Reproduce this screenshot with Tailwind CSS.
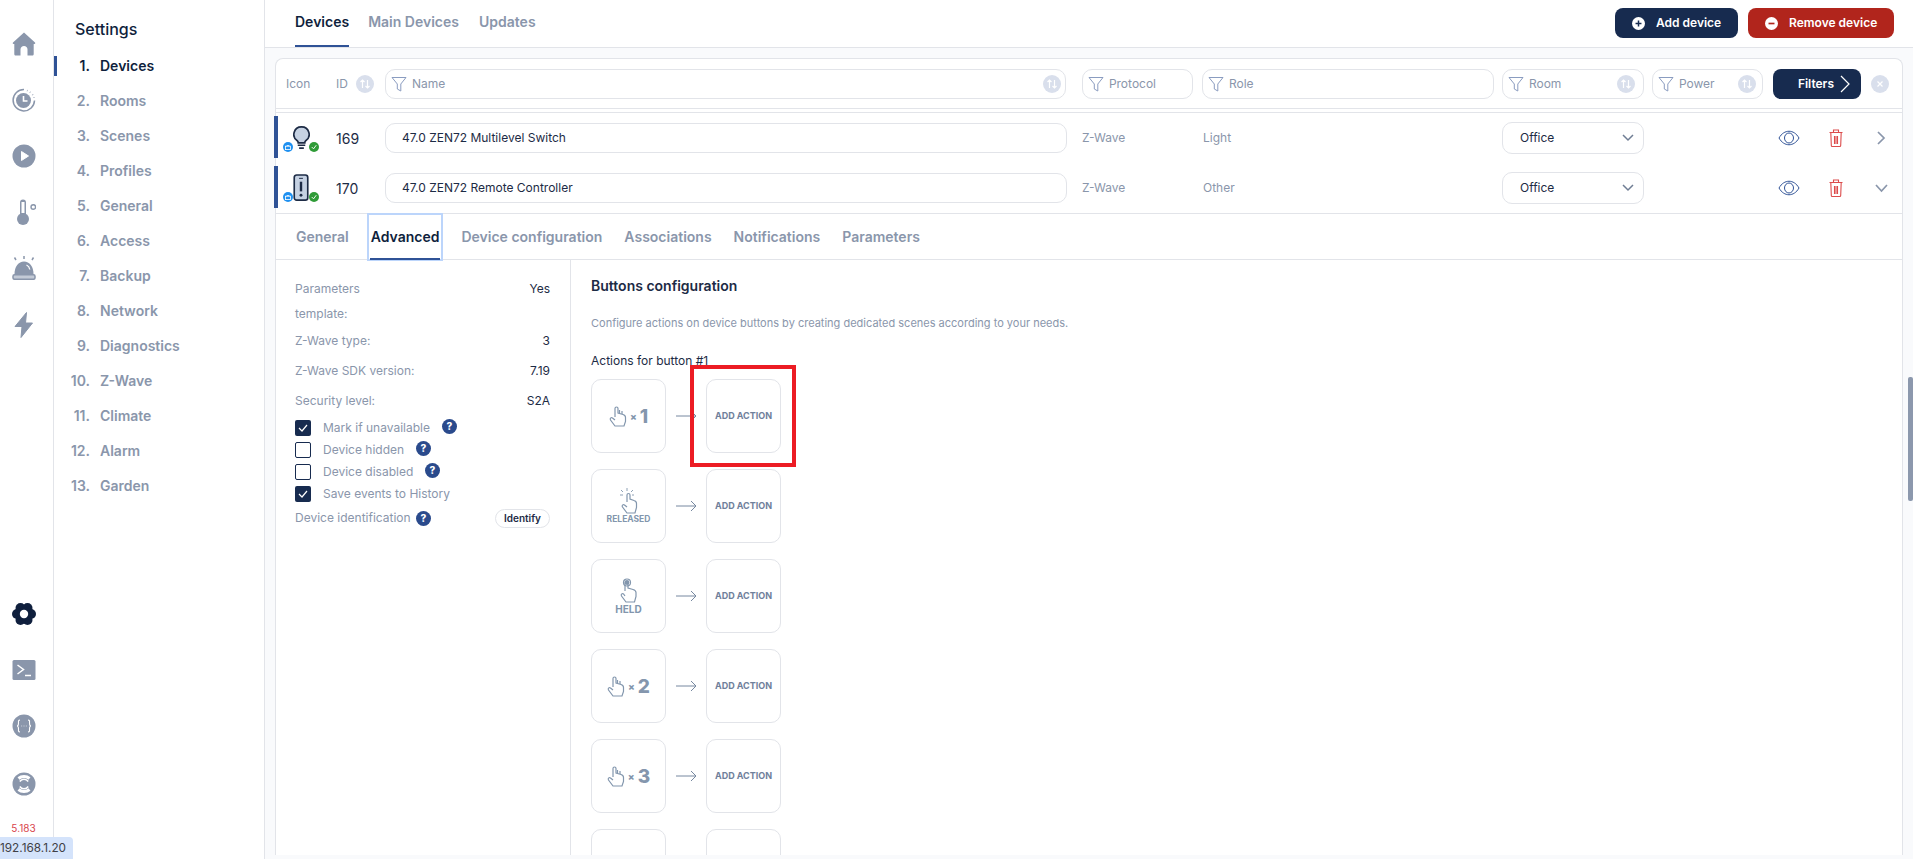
<!doctype html>
<html>
<head>
<meta charset="utf-8">
<script src="https://cdn.jsdelivr.net/npm/@tailwindcss/browser@4"></script>
</head>
<body class="h-[859px] w-[1913px] overflow-hidden bg-white font-['Inter',sans-serif] text-[#0f1f3d]">
<div class="flex h-[859px] relative">
  <!-- Rail -->
  <aside class="w-[54px] shrink-0 border-r border-[#e2e4e9] flex flex-col items-center text-[#8a96ab] relative">
    <div class="flex flex-col items-center gap-[32px] pt-[32px] w-[48px] self-start">
      <svg class="w-6 h-6" viewBox="0 0 24 24" fill="currentColor"><path d="M12 .5 1 10.500c-.5.6-.3 1.500.5 1.500h.8v10c0 1 .7 1.500 1.500 1.500h4.700v-6c0-2 1.500-3.500 3.500-3.500s3.500 1.500 3.500 3.500v6h4.700c.8 0 1.500-.5 1.500-1.500V12h.8c.8 0 1-.9.5-1.500z"/></svg>
      <svg class="w-6 h-6" viewBox="0 0 24 24" fill="none" stroke="currentColor"><circle cx="11.500" cy="12.500" r="7.500" fill="currentColor" stroke="none"/><path d="M11.500 8v5h4" stroke="#fff" stroke-width="1.600"/><path d="M12 1.500a10.700 10.700 0 1 0 10.500 11" stroke-width="1.500"/><path d="M15 2.500l.5.2M18 4l.4.4M20.500 6.500l.3.4M22 9.500v.4" stroke-width="1.700"/></svg>
      <svg class="w-6 h-6" viewBox="0 0 24 24"><circle cx="12" cy="12" r="11.500" fill="currentColor"/><path d="M9.500 7.500v9l7-4.500z" fill="#fff" stroke="#fff" stroke-linejoin="round"/></svg>
      <svg class="w-6 h-[26px] -my-[1px]" viewBox="0 0 24 26" fill="none"><circle cx="11" cy="20" r="6" fill="currentColor"/><path d="M8 16V3.500a3 3 0 0 1 6 0V16z" fill="currentColor"/><path d="M11 3v11" stroke="#fff" stroke-width="3"/><circle cx="21.300" cy="8" r="2.300" stroke="currentColor" stroke-width="1.400"/></svg>
      <svg class="w-6 h-6" viewBox="0 0 24 24" fill="currentColor"><path d="M2.500 18c0-7.500 4-12.500 9.500-12.500S21.500 10.500 21.500 18z"/><path d="M14.500 9c2 .9 3 2.500 3.300 4.500" stroke="#fff" stroke-width="1.300" fill="none"/><rect x="1" y="18.800" width="22" height="4.500" rx="1.500" fill="#c3cad6" stroke="currentColor" stroke-width="1.500"/><path d="M12 0v3M2.500 1.500l1.500 2.500M21.500 1.500L20 4" stroke="currentColor" stroke-width="1.500"/></svg>
      <svg class="w-6 h-[26px]" viewBox="0 0 24 26" fill="currentColor"><path d="M14.500 0.500 3 14.500h7l-1 11 11.500-14.500h-7z" stroke="currentColor" stroke-linejoin="round"/></svg>
    </div>
    <div class="absolute top-[602px] left-[11px] flex flex-col gap-[34px] items-center w-[26px]">
      <svg class="w-6 h-6 text-[#0f1f3d]" viewBox="0 0 24 24" fill="currentColor"><circle cx="19" cy="12" r="5"/><circle cx="15.500" cy="18.060" r="5"/><circle cx="8.500" cy="18.060" r="5"/><circle cx="5" cy="12" r="5"/><circle cx="8.500" cy="5.940" r="5"/><circle cx="15.500" cy="5.940" r="5"/><circle cx="12" cy="12" r="7"/><circle cx="12" cy="12" r="4.200" fill="#fff"/></svg>
      <svg class="w-6 h-5" viewBox="0 0 24 20"><rect x=".5" width="23" height="20" rx="1.500" fill="currentColor"/><path d="M5.500 5l6 4.500-6 4.500" stroke="#fff" stroke-width="1.500" fill="none"/><path d="M13 15.500h6" stroke="#fff" stroke-width="1.500"/></svg>
      <svg class="w-6 h-6" viewBox="0 0 24 24"><circle cx="12" cy="12" r="11.500" fill="currentColor"/><path d="M8 6c-2 0-1.500 1.500-1.500 3S6.500 12 5 12c1.500 0 1.500 1.500 1.500 3S6 18 8 18M16 6c2 0 1.500 1.500 1.500 3s0 3 1.500 3c-1.500 0-1.500 1.500-1.500 3s.5 3-1.500 3" stroke="#fff" stroke-width="1.100" fill="none"/><path d="M9.500 12h.6M11.700 12h.6M13.900 12h.6" stroke="#fff" stroke-width="1.200"/></svg>
      <svg class="w-6 h-6" viewBox="0 0 24 24"><circle cx="12" cy="12" r="11.500" fill="currentColor"/><path d="M6.500 6.500c3-2.600 8-2.600 11 0M6.500 17.500c3 2.600 8 2.600 11 0" stroke="#fff" stroke-width="3" fill="none"/><path d="M7.800 9.500a5 5 0 0 1 8.400 0M7.800 14.500a5 5 0 0 0 8.400 0" stroke="#fff" stroke-width="1.500" fill="none"/></svg>
    </div>
    <div class="absolute top-[821px] left-0 w-[47px] text-center text-[10px] leading-[14px] text-[#d8434b]">5.183</div>
  </aside>
  <div class="absolute left-0 top-[837px] w-[73px] h-[22px] bg-[#d4e3fb] rounded-tr-[4px] text-[11.800px] leading-[22px] text-[#3f3f46] whitespace-nowrap">192.168.1.20</div>

  <!-- Settings nav -->
  <nav class="w-[211px] shrink-0 border-r border-[#e2e4e9] relative">
    <h1 class="pl-[21px] pt-[19px] text-[16px] leading-[20px] font-medium text-[#0f1f3d]">Settings</h1>
    <ul class="mt-[9px] text-[14px] font-semibold text-[#8a96ab]">
      <li class="h-[35px] flex items-center relative text-[#0f1f3d]"><span class="absolute left-0 top-[8px] w-[3px] h-[20px] bg-[#2f5296]"></span><span class="w-[36px] text-right">1.</span><span class="ml-[10px]">Devices</span></li>
      <li class="h-[35px] flex items-center"><span class="w-[36px] text-right">2.</span><span class="ml-[10px]">Rooms</span></li>
      <li class="h-[35px] flex items-center"><span class="w-[36px] text-right">3.</span><span class="ml-[10px]">Scenes</span></li>
      <li class="h-[35px] flex items-center"><span class="w-[36px] text-right">4.</span><span class="ml-[10px]">Profiles</span></li>
      <li class="h-[35px] flex items-center"><span class="w-[36px] text-right">5.</span><span class="ml-[10px]">General</span></li>
      <li class="h-[35px] flex items-center"><span class="w-[36px] text-right">6.</span><span class="ml-[10px]">Access</span></li>
      <li class="h-[35px] flex items-center"><span class="w-[36px] text-right">7.</span><span class="ml-[10px]">Backup</span></li>
      <li class="h-[35px] flex items-center"><span class="w-[36px] text-right">8.</span><span class="ml-[10px]">Network</span></li>
      <li class="h-[35px] flex items-center"><span class="w-[36px] text-right">9.</span><span class="ml-[10px]">Diagnostics</span></li>
      <li class="h-[35px] flex items-center"><span class="w-[36px] text-right">10.</span><span class="ml-[10px]">Z-Wave</span></li>
      <li class="h-[35px] flex items-center"><span class="w-[36px] text-right">11.</span><span class="ml-[10px]">Climate</span></li>
      <li class="h-[35px] flex items-center"><span class="w-[36px] text-right">12.</span><span class="ml-[10px]">Alarm</span></li>
      <li class="h-[35px] flex items-center"><span class="w-[36px] text-right">13.</span><span class="ml-[10px]">Garden</span></li>
    </ul>
  </nav>

  <!-- Main -->
  <main class="flex-1 min-w-0 flex flex-col relative">
    <header class="h-[48px] shrink-0 border-b border-[#e2e4e9] flex items-start relative">
      <div class="flex pl-[30px] gap-[20px] text-[14px] font-semibold text-[#8a96ab]">
        <span class="h-[47px] pt-[12px] leading-[20px] border-b-2 border-[#2f5296] text-[#0f1f3d]">Devices</span>
        <span class="pt-[12px] leading-[20px] -ml-[1px]">Main Devices</span>
        <span class="pt-[12px] leading-[20px]">Updates</span>
      </div>
      <div class="ml-auto mr-[19px] mt-[8px] flex gap-[10px] text-[12px] font-semibold text-white">
        <button class="h-[30px] w-[123px] rounded-[8px] bg-[#172b4f] flex items-center pl-[17px] gap-[11px]"><svg class="w-[13px] h-[13px]" viewBox="0 0 14 14"><circle cx="7" cy="7" r="7" fill="#fff"/><path d="M7 3.800v6.400M3.800 7h6.400" stroke="#172b4f" stroke-width="1.600"/></svg>Add device</button>
        <button class="h-[30px] w-[146px] rounded-[8px] bg-[#b1251c] flex items-center pl-[17px] gap-[11px]"><svg class="w-[13px] h-[13px]" viewBox="0 0 14 14"><circle cx="7" cy="7" r="7" fill="#fff"/><path d="M3.800 7h6.400" stroke="#b1251c" stroke-width="1.800"/></svg>Remove device</button>
      </div>
    </header>

    <div class="flex-1 min-h-0 bg-[#f9fafc] pl-[10px] pr-[10px] pt-[10px] pb-[4px] flex flex-col">
      <div class="flex-1 min-h-0 overflow-x-visible overflow-y-clip bg-white border border-[#e2e4e9] rounded-t-[8px] border-b-0">
        <!-- Filter row -->
        <div class="h-[50px] border-b border-[#e2e4e9] flex items-center text-[12px] text-[#8a96ab] pl-[10px] relative">
          <span class="w-[50px]">Icon</span>
          <span>ID</span>
          <svg class="w-[18px] h-[18px] ml-[8px]" viewBox="0 0 18 18"><circle cx="9" cy="9" r="9" fill="#d9dfec"/><path d="M6.500 13V5M4.500 7l2-2 2 2M11.500 5v8M9.500 11l2 2 2-2" stroke="#fff" stroke-width="1.200" fill="none"/></svg>
          <div class="ml-[11px] w-[681px] h-[30px] border border-[#e2e4e9] rounded-[10px] flex items-center pl-[5px] gap-[5px]">
            <svg class="w-[16px] h-[16px]" viewBox="0 0 16 16" fill="none" stroke="#8a9cc0"><path d="M1 1.500h14L9.800 8v7l-3.500-2V8z" stroke-linejoin="round"/></svg>Name
            <svg class="w-[18px] h-[18px] ml-auto mr-[4px]" viewBox="0 0 18 18"><circle cx="9" cy="9" r="9" fill="#d9dfec"/><path d="M6.500 13V5M4.500 7l2-2 2 2M11.500 5v8M9.500 11l2 2 2-2" stroke="#fff" stroke-width="1.200" fill="none"/></svg>
          </div>
          <div class="ml-[16px] w-[111px] h-[30px] border border-[#e2e4e9] rounded-[10px] flex items-center pl-[5px] gap-[5px]">
            <svg class="w-[16px] h-[16px]" viewBox="0 0 16 16" fill="none" stroke="#8a9cc0"><path d="M1 1.500h14L9.800 8v7l-3.500-2V8z" stroke-linejoin="round"/></svg>Protocol
          </div>
          <div class="ml-[9px] w-[292px] h-[30px] border border-[#e2e4e9] rounded-[10px] flex items-center pl-[5px] gap-[5px]">
            <svg class="w-[16px] h-[16px]" viewBox="0 0 16 16" fill="none" stroke="#8a9cc0"><path d="M1 1.500h14L9.800 8v7l-3.500-2V8z" stroke-linejoin="round"/></svg>Role
          </div>
          <div class="ml-[8px] w-[142px] h-[30px] border border-[#e2e4e9] rounded-[10px] flex items-center pl-[5px] gap-[5px]">
            <svg class="w-[16px] h-[16px]" viewBox="0 0 16 16" fill="none" stroke="#8a9cc0"><path d="M1 1.500h14L9.800 8v7l-3.500-2V8z" stroke-linejoin="round"/></svg>Room
            <svg class="w-[18px] h-[18px] ml-auto mr-[8px]" viewBox="0 0 18 18"><circle cx="9" cy="9" r="9" fill="#d9dfec"/><path d="M6.500 13V5M4.500 7l2-2 2 2M11.500 5v8M9.500 11l2 2 2-2" stroke="#fff" stroke-width="1.200" fill="none"/></svg>
          </div>
          <div class="ml-[8px] w-[111px] h-[30px] border border-[#e2e4e9] rounded-[10px] flex items-center pl-[5px] gap-[5px]">
            <svg class="w-[16px] h-[16px]" viewBox="0 0 16 16" fill="none" stroke="#8a9cc0"><path d="M1 1.500h14L9.800 8v7l-3.500-2V8z" stroke-linejoin="round"/></svg>Power
            <svg class="w-[18px] h-[18px] ml-auto mr-[6px]" viewBox="0 0 18 18"><circle cx="9" cy="9" r="9" fill="#d9dfec"/><path d="M6.500 13V5M4.500 7l2-2 2 2M11.500 5v8M9.500 11l2 2 2-2" stroke="#fff" stroke-width="1.200" fill="none"/></svg>
          </div>
          <button class="ml-[10px] w-[88px] h-[30px] rounded-[8px] bg-[#172b4f] text-white font-semibold flex items-center pl-[25px] gap-[6px]">Filters<svg class="w-[10px] h-[18px]" viewBox="0 0 10 18" fill="none" stroke="#fff" stroke-width="1.200"><path d="M1 1l8 8-8 8"/></svg></button>
          <svg class="ml-[10px] w-[18px] h-[18px]" viewBox="0 0 18 18"><circle cx="9" cy="9" r="9" fill="#d9dfec"/><path d="M6.500 6.500l5 5M11.500 6.500l-5 5" stroke="#fff" stroke-width="1.200"/></svg>
        </div>
        <div class="h-[3px]"></div>
        <!-- Rows -->
        <div class="border-t border-b border-[#e2e4e9]">
          <div class="h-[50px] flex items-center relative text-[12px]">
            <span class="absolute left-[-2px] top-[3px] w-[4px] h-[42px] bg-[#2f5296]"></span>
            <div class="w-[52px] ml-[8px] shrink-0 relative h-[30px]">
              <svg class="absolute left-[9px] top-[3px] w-[17px] h-[23px]" viewBox="1.200 .5 17.600 24.500" fill="none" stroke="#1d2b45" stroke-width="1.800"><path d="M10 1.500a8 8 0 0 0-4.500 14.700c.7.500 1 1.300 1 2.300h7c0-1 .3-1.800 1-2.300A8 8 0 0 0 10 1.500z" fill="#c5d1e2"/><path d="M6 21h8M7.500 24h5"/></svg>
              <span class="absolute left-[-1px] top-[19px] w-[10px] h-[10px] rounded-full bg-[#1e90f0] flex items-center justify-center"><svg class="w-[6px] h-[5px]" viewBox="0 0 6 5" fill="none" stroke="#fff" stroke-width=".8"><rect x=".5" y="1.200" width="5" height="3.400"/><path d="M2 1.200V.4h2v.8"/></svg></span>
              <span class="absolute left-[25px] top-[19px] w-[10px] h-[10px] rounded-full bg-[#2f9b37]"><svg viewBox="0 0 11 11" fill="none" stroke="#fff"><path d="M3 5.500l2 2 3-4"/></svg></span>
            </div>
            <span class="w-[49px] text-[14px] text-[#1d2b45]">169</span>
            <div class="w-[682px] h-[30px] border border-[#e2e4e9] rounded-[10px] flex items-center pl-[16px] text-[#1d2b45]">47.0 ZEN72 Multilevel Switch</div>
            <span class="ml-[15px] w-[121px] text-[#8a96ab]">Z-Wave</span>
            <span class="w-[299px] text-[#8a96ab]">Light</span>
            <div class="w-[142px] h-[32px] border border-[#e2e4e9] rounded-[10px] flex items-center px-[17px] text-[#1d2b45]">Office<svg class="ml-auto w-[12px] h-[8px] mr-[-8px]" viewBox="0 0 12 8" fill="none" stroke="#6f7d94" stroke-width="1.500"><path d="M1 1l5 5 5-5"/></svg></div>
            <svg class="ml-[134px] w-[22px] h-[16px]" viewBox="0 0 22 16" fill="none" stroke="#2f5296"><path d="M1 8c5-9 15-9 20 0-5 9-15 9-20 0z"/><ellipse cx="11" cy="8" rx="4.500" ry="5"/></svg>
            <svg class="ml-[29px] w-[14px] h-[18px]" viewBox="0 0 14 18" fill="none" stroke="#dc4c4c" stroke-width="1.100"><path d="M.5 3.500h13M4.500 3.500V1h5v2.500M1.800 3.500l.5 13c0 .5.300 1 1 1h7.400c.7 0 1-.5 1-1l.5-13M5.500 7v8M7 7v8M8.500 7v8"/></svg>
            <svg class="ml-[34px] w-[9px] h-[14px]" viewBox="0 0 9 14" fill="none" stroke="#8a96ab" stroke-width="1.700"><path d="M1 1l6 6-6 6"/></svg>
          </div>
          <div class="h-[50px] flex items-center relative text-[12px]">
            <span class="absolute left-[-2px] top-[3px] w-[4px] h-[42px] bg-[#2f5296]"></span>
            <div class="w-[52px] ml-[8px] shrink-0 relative h-[30px]">
              <svg class="absolute left-[8px] top-[1px] w-[18px] h-[28px]" viewBox="0 0 18 29" fill="none"><rect x="2" y="1" width="14" height="26" rx="2.500" fill="#c5d1e2" stroke="#1d2b45" stroke-width="1.700"/><path d="M9 8v10" stroke="#1d2b45" stroke-width="2.500"/><circle cx="9" cy="22" r="1.500" fill="#1d2b45"/><path d="M7 4.500h4" stroke="#1d2b45"/></svg>
              <span class="absolute left-[-1px] top-[19px] w-[10px] h-[10px] rounded-full bg-[#1e90f0] flex items-center justify-center"><svg class="w-[6px] h-[5px]" viewBox="0 0 6 5" fill="none" stroke="#fff" stroke-width=".8"><rect x=".5" y="1.200" width="5" height="3.400"/><path d="M2 1.200V.4h2v.8"/></svg></span>
              <span class="absolute left-[25px] top-[19px] w-[10px] h-[10px] rounded-full bg-[#2f9b37]"><svg viewBox="0 0 11 11" fill="none" stroke="#fff"><path d="M3 5.500l2 2 3-4"/></svg></span>
            </div>
            <span class="w-[49px] text-[14px] text-[#1d2b45]">170</span>
            <div class="w-[682px] h-[30px] border border-[#e2e4e9] rounded-[10px] flex items-center pl-[16px] text-[#1d2b45]">47.0 ZEN72 Remote Controller</div>
            <span class="ml-[15px] w-[121px] text-[#8a96ab]">Z-Wave</span>
            <span class="w-[299px] text-[#8a96ab]">Other</span>
            <div class="w-[142px] h-[32px] border border-[#e2e4e9] rounded-[10px] flex items-center px-[17px] text-[#1d2b45]">Office<svg class="ml-auto w-[12px] h-[8px] mr-[-8px]" viewBox="0 0 12 8" fill="none" stroke="#6f7d94" stroke-width="1.500"><path d="M1 1l5 5 5-5"/></svg></div>
            <svg class="ml-[134px] w-[22px] h-[16px]" viewBox="0 0 22 16" fill="none" stroke="#2f5296"><path d="M1 8c5-9 15-9 20 0-5 9-15 9-20 0z"/><ellipse cx="11" cy="8" rx="4.500" ry="5"/></svg>
            <svg class="ml-[29px] w-[14px] h-[18px]" viewBox="0 0 14 18" fill="none" stroke="#dc4c4c" stroke-width="1.100"><path d="M.5 3.500h13M4.500 3.500V1h5v2.500M1.800 3.500l.5 13c0 .5.300 1 1 1h7.400c.7 0 1-.5 1-1l.5-13M5.500 7v8M7 7v8M8.500 7v8"/></svg>
            <svg class="ml-[32px] w-[13px] h-[9px]" viewBox="0 0 13 9" fill="none" stroke="#8a96ab" stroke-width="1.700"><path d="M1 1l5.500 6L12 1"/></svg>
          </div>
        </div>
        <!-- Detail tabs -->
        <div class="h-[46px] border-b border-[#e2e4e9] flex text-[14px] font-semibold text-[#8a96ab] pl-[20px] gap-[22px]">
          <span class="leading-[46px]">General</span>
          <span class="leading-[46px] h-[46px] text-[#0f1f3d] relative">Advanced<span class="absolute -inset-x-[4px] inset-y-[-1px] border-2 border-[#bcd5fb]"></span><span class="absolute -inset-x-[1px] bottom-[0px] h-[2px] bg-[#2f5296]"></span></span>
          <span class="leading-[46px]">Device configuration</span>
          <span class="leading-[46px]">Associations</span>
          <span class="leading-[46px]">Notifications</span>
          <span class="leading-[46px]">Parameters</span>
        </div>
        <!-- Detail body -->
        <div class="flex relative">
          <div class="w-[295px] shrink-0 pt-[16px] pl-[19px] pr-[20px] mb-[-200px] h-[600px] border-r border-[#e2e4e9] text-[12px] text-[#8a96ab]">
            <div class="flex justify-between leading-[25px] h-[52px]"><span class="w-[90px]">Parameters template:</span><span class="text-[#1d2b45]">Yes</span></div>
            <div class="flex justify-between h-[30px] leading-[30px] -mt-[2px]"><span>Z-Wave type:</span><span class="text-[#1d2b45]">3</span></div>
            <div class="flex justify-between h-[30px] leading-[30px]"><span>Z-Wave SDK version:</span><span class="text-[#1d2b45]">7.19</span></div>
            <div class="flex justify-between h-[31px] leading-[30px]"><span>Security level:</span><span class="text-[#1d2b45]">S2A</span></div>
            <div class="h-[22px] flex items-center gap-[12px]"><span class="w-[16px] h-[16px] rounded-[2px] bg-[#172b4f] flex items-center justify-center"><svg class="w-[10px] h-[8px]" viewBox="0 0 10 8" fill="none" stroke="#fff" stroke-width="1.200"><path d="M1 4l3 3 5-6"/></svg></span>Mark if unavailable<svg class="w-[15px] h-[15px] -mt-[4px]" viewBox="0 0 15 15"><circle cx="7.500" cy="7.500" r="7.500" fill="#2a4a8c"/><text x="7.500" y="11" text-anchor="middle" font-size="10" font-weight="800" fill="#fff" font-family="Inter">?</text></svg></div>
            <div class="h-[22px] flex items-center gap-[12px]"><span class="w-[16px] h-[16px] rounded-[2px] border border-[#172b4f]"></span>Device hidden<svg class="w-[15px] h-[15px] -mt-[3px]" viewBox="0 0 15 15"><circle cx="7.500" cy="7.500" r="7.500" fill="#2a4a8c"/><text x="7.500" y="11" text-anchor="middle" font-size="10" font-weight="800" fill="#fff" font-family="Inter">?</text></svg></div>
            <div class="h-[22px] flex items-center gap-[12px]"><span class="w-[16px] h-[16px] rounded-[2px] border border-[#172b4f]"></span>Device disabled<svg class="w-[15px] h-[15px] -mt-[3px]" viewBox="0 0 15 15"><circle cx="7.500" cy="7.500" r="7.500" fill="#2a4a8c"/><text x="7.500" y="11" text-anchor="middle" font-size="10" font-weight="800" fill="#fff" font-family="Inter">?</text></svg></div>
            <div class="h-[22px] flex items-center gap-[12px]"><span class="w-[16px] h-[16px] rounded-[2px] bg-[#172b4f] flex items-center justify-center"><svg class="w-[10px] h-[8px]" viewBox="0 0 10 8" fill="none" stroke="#fff" stroke-width="1.200"><path d="M1 4l3 3 5-6"/></svg></span>Save events to History</div>
            <div class="h-[26px] flex items-center gap-[5px]">Device identification<svg class="w-[15px] h-[15px]" viewBox="0 0 15 15"><circle cx="7.500" cy="7.500" r="7.500" fill="#2a4a8c"/><text x="7.500" y="11" text-anchor="middle" font-size="10" font-weight="800" fill="#fff" font-family="Inter">?</text></svg><button class="ml-auto w-[55px] h-[19px] rounded-full border border-[#e2e4e9] text-[10px] font-semibold text-[#1d2b45]">Identify</button></div>
          </div>
          <div class="pl-[20px] pt-[16px] relative">
            <h2 class="text-[14px] leading-[20px] font-semibold text-[#1d2b45]">Buttons configuration</h2>
            <p class="mt-[19px] text-[11px] leading-[16px] text-[#8a96ab]">Configure actions on device buttons by creating dedicated scenes according to your needs.</p>
            <p class="mt-[22px] text-[12px] leading-[16px] text-[#1d2b45]">Actions for button #1</p>
            <div class="mt-[10px] flex flex-col gap-[16px]">
              <div class="flex items-center">
                <div class="w-[75px] h-[74px] border border-[#e2e4e9] rounded-[10px] flex items-center justify-center gap-[3px] text-[#8296ad]">
                  <svg class="w-[18px] h-[21px]" viewBox="0 0 18 21" fill="none" stroke="currentColor" stroke-width="1.200"><path d="M6 11V2.500c0-2 3-2 3 0V7l5 1.500c2 .6 2.500 1.500 2.500 3v4L15 20H6l-4.500-6c-1-2 1-3 2-2L6 14"/><path d="M10.500 7V4M13 8V5"/></svg>
                  <span class="text-[10px] font-extrabold">×</span><span class="text-[19px] font-extrabold leading-none text-[#8496ad]">1</span>
                </div>
                <svg class="ml-[10px] mr-[9px] w-[21px] h-[12px]" viewBox="0 0 21 12" fill="none" stroke="#7688a0"><path d="M0 6h20M15 1l5 5-5 5"/></svg>
                <div class="w-[75px] h-[74px] border border-[#e2e4e9] rounded-[10px] flex items-center justify-center text-[9px] font-bold text-[#6f809b] whitespace-nowrap">ADD ACTION</div>
              </div>
              <div class="flex items-center">
                <div class="w-[75px] h-[74px] border border-[#e2e4e9] rounded-[10px] flex flex-col items-center justify-center text-[#8296ad]">
                  <svg class="w-[20px] h-[27px]" viewBox="0 0 20 27" fill="none" stroke="currentColor" stroke-width="1.200"><path d="M8 15V8c0-2 3-2 3 0v4l4 1.500c2 .6 2.500 1.500 2.500 3v4L16 26H8l-4.500-6c-1-2 1-3 2-2L8 20"/><path d="M8 1v3M2 3l2 2M1 8h3M14 3l-2 2M15 8h-2" stroke-width=".9"/></svg>
                  <span class="text-[8.500px] leading-[11px] font-bold">RELEASED</span>
                </div>
                <svg class="ml-[10px] mr-[9px] w-[21px] h-[12px]" viewBox="0 0 21 12" fill="none" stroke="#7688a0"><path d="M0 6h20M15 1l5 5-5 5"/></svg>
                <div class="w-[75px] h-[74px] border border-[#e2e4e9] rounded-[10px] flex items-center justify-center text-[9px] font-bold text-[#6f809b] whitespace-nowrap">ADD ACTION</div>
              </div>
              <div class="flex items-center">
                <div class="w-[75px] h-[74px] border border-[#e2e4e9] rounded-[10px] flex flex-col items-center justify-center text-[#8296ad]">
                  <svg class="w-[20px] h-[25px]" viewBox="0 0 20 25" fill="none" stroke="currentColor" stroke-width="1.200"><circle cx="8" cy="4.500" r="3.500"/><circle cx="8" cy="4.500" r="1.800" fill="currentColor"/><path d="M6 13V5c0-2 3-2 3 0v5l5 1.500c2 .6 3 1.500 3 3v4L15.500 24H7l-4.500-6c-1-2 1-3 2-2L6 18"/></svg>
                  <span class="text-[10px] leading-[12px] font-bold">HELD</span>
                </div>
                <svg class="ml-[10px] mr-[9px] w-[21px] h-[12px]" viewBox="0 0 21 12" fill="none" stroke="#7688a0"><path d="M0 6h20M15 1l5 5-5 5"/></svg>
                <div class="w-[75px] h-[74px] border border-[#e2e4e9] rounded-[10px] flex items-center justify-center text-[9px] font-bold text-[#6f809b] whitespace-nowrap">ADD ACTION</div>
              </div>
              <div class="flex items-center">
                <div class="w-[75px] h-[74px] border border-[#e2e4e9] rounded-[10px] flex items-center justify-center gap-[3px] text-[#8296ad]">
                  <svg class="w-[18px] h-[21px]" viewBox="0 0 18 21" fill="none" stroke="currentColor" stroke-width="1.200"><path d="M6 11V2.500c0-2 3-2 3 0V7l5 1.500c2 .6 2.500 1.500 2.500 3v4L15 20H6l-4.500-6c-1-2 1-3 2-2L6 14"/><path d="M10.500 7V4M13 8V5"/></svg>
                  <span class="text-[10px] font-extrabold">×</span><span class="text-[19px] font-extrabold leading-none text-[#8496ad]">2</span>
                </div>
                <svg class="ml-[10px] mr-[9px] w-[21px] h-[12px]" viewBox="0 0 21 12" fill="none" stroke="#7688a0"><path d="M0 6h20M15 1l5 5-5 5"/></svg>
                <div class="w-[75px] h-[74px] border border-[#e2e4e9] rounded-[10px] flex items-center justify-center text-[9px] font-bold text-[#6f809b] whitespace-nowrap">ADD ACTION</div>
              </div>
              <div class="flex items-center">
                <div class="w-[75px] h-[74px] border border-[#e2e4e9] rounded-[10px] flex items-center justify-center gap-[3px] text-[#8296ad]">
                  <svg class="w-[18px] h-[21px]" viewBox="0 0 18 21" fill="none" stroke="currentColor" stroke-width="1.200"><path d="M6 11V2.500c0-2 3-2 3 0V7l5 1.500c2 .6 2.500 1.500 2.500 3v4L15 20H6l-4.500-6c-1-2 1-3 2-2L6 14"/><path d="M10.500 7V4M13 8V5"/></svg>
                  <span class="text-[10px] font-extrabold">×</span><span class="text-[19px] font-extrabold leading-none text-[#8496ad]">3</span>
                </div>
                <svg class="ml-[10px] mr-[9px] w-[21px] h-[12px]" viewBox="0 0 21 12" fill="none" stroke="#7688a0"><path d="M0 6h20M15 1l5 5-5 5"/></svg>
                <div class="w-[75px] h-[74px] border border-[#e2e4e9] rounded-[10px] flex items-center justify-center text-[9px] font-bold text-[#6f809b] whitespace-nowrap">ADD ACTION</div>
              </div>
              <div class="flex items-center">
                <div class="w-[75px] h-[74px] border border-[#e2e4e9] rounded-[10px]"></div>
                <div class="ml-[40px] w-[75px] h-[74px] border border-[#e2e4e9] rounded-[10px]"></div>
              </div>
            </div>
            <div class="absolute left-[119px] top-[105px] w-[106px] h-[102px] border-4 border-[#ec1c24]"></div>
          </div>
        </div>
      </div>
    </div>
    <div class="absolute right-0 top-[377px] w-[5px] h-[124px] rounded-[2px] bg-[#8c98ad]"></div>
  </main>
</div>
</body>
</html>
